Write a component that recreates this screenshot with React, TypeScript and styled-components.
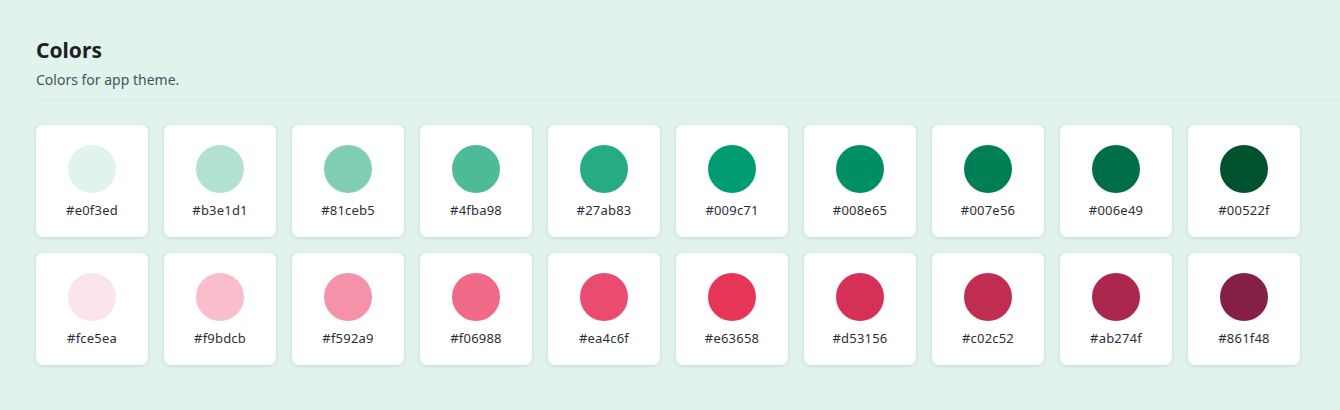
import styled, { createGlobalStyle } from 'styled-components';

const GlobalStyle = createGlobalStyle`
  html, body {
    margin: 0;
    padding: 0;
    background: #e0f3ed;
    font-family: "Source Sans Pro", "Noto Sans", "Open Sans", sans-serif;
    color: #1f2328;
  }
`;

const Page = styled.div`
  padding: 33px 0 40px 36px;
`;

const Header = styled.div`
  border-bottom: 1px solid #dce4ee;
  padding-bottom: 10px;
`;

const Title = styled.h2`
  margin: 0;
  font-size: 21px;
  font-weight: 700;
  line-height: 34px;
  color: #1c1f24;
`;

const Subtitle = styled.p`
  margin: 3px 0 0;
  font-size: 14px;
  line-height: 20px;
  color: #4a5260;
`;

const Grid = styled.div`
  display: grid;
  grid-template-columns: repeat(10, 112px);
  gap: 16px;
  margin-top: 24px;
`;

const Card = styled.div`
  height: 112px;
  background: #fff;
  border-radius: 7px;
  box-shadow: 0 1px 4px rgba(0, 0, 0, 0.12);
  display: flex;
  flex-direction: column;
  align-items: center;
  padding-top: 20px;
  box-sizing: border-box;
`;

const Swatch = styled.div<{ $color: string }>`
  width: 48px;
  height: 48px;
  border-radius: 50%;
  background: ${(p) => p.$color};
`;

const Label = styled.span`
  margin-top: 8px;
  font-size: 13px;
  line-height: 18px;
  letter-spacing: 0.2px;
  color: #2b2f36;
`;

const greens = ['#e0f3ed', '#b3e1d1', '#81ceb5', '#4fba98', '#27ab83', '#009c71', '#008e65', '#007e56', '#006e49', '#00522f'];
const reds = ['#fce5ea', '#f9bdcb', '#f592a9', '#f06988', '#ea4c6f', '#e63658', '#d53156', '#c02c52', '#ab274f', '#861f48'];

export default function App() {
  return (
    <Page>
      <GlobalStyle />
      <Header>
        <Title>Colors</Title>
        <Subtitle>Colors for app theme.</Subtitle>
      </Header>
      <Grid>
        {[...greens, ...reds].map((c) => (
          <Card key={c}>
            <Swatch $color={c} />
            <Label>{c}</Label>
          </Card>
        ))}
      </Grid>
    </Page>
  );
}
